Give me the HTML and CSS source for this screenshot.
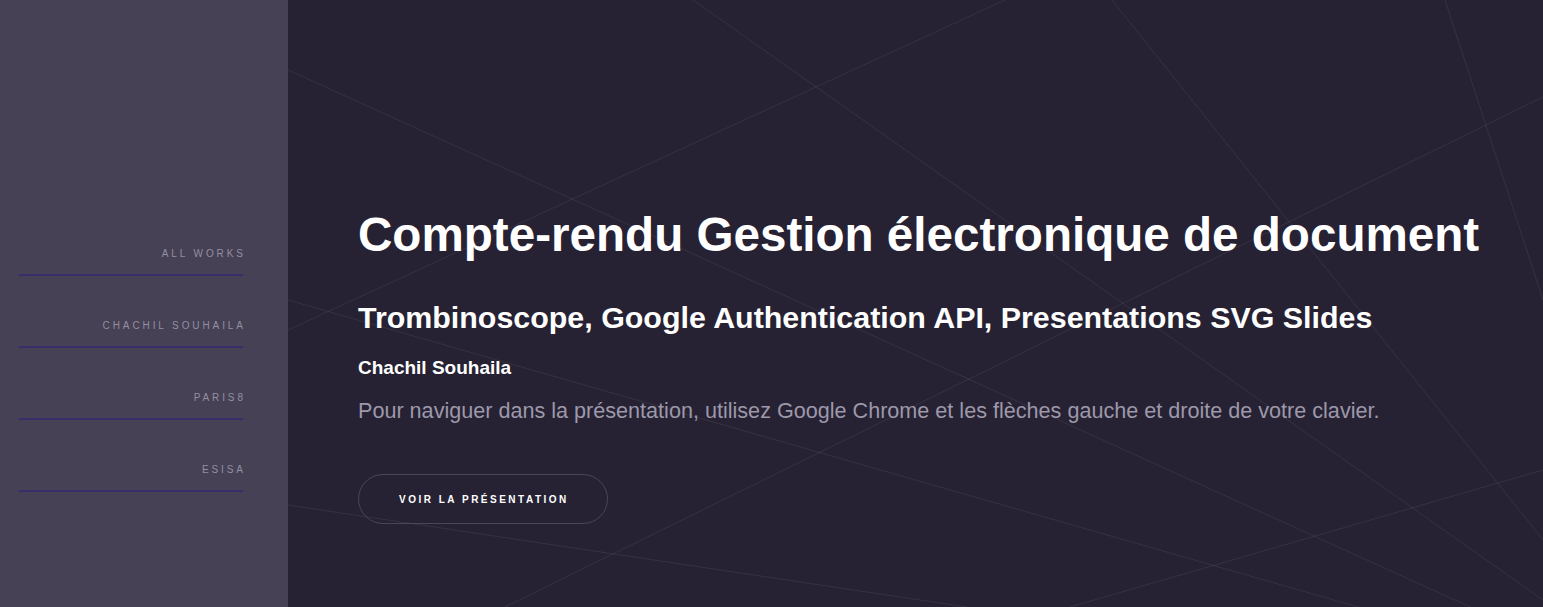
FILE: index.html
```html
<!DOCTYPE html>
<html lang="fr">
<head>
<meta charset="utf-8">
<title>Compte-rendu Gestion électronique de document</title>
<link rel="stylesheet" href="styles.css">
</head>
<body>
<div class="page">
  <aside class="sidebar">
    <nav class="nav">
      <a class="nav-item" href="#"><span>All works</span></a>
      <a class="nav-item" href="#"><span>Chachil Souhaila</span></a>
      <a class="nav-item" href="#"><span>Paris8</span></a>
      <a class="nav-item" href="#"><span>Esisa</span></a>
    </nav>
  </aside>
  <main class="main">
    <svg class="bg-lines" viewBox="288 0 1255 607" preserveAspectRatio="none" aria-hidden="true">
      <line x1="693" y1="0" x2="1543" y2="600"/>
      <line x1="288" y1="70" x2="1543" y2="640"/>
      <line x1="288" y1="330" x2="1005" y2="0"/>
      <line x1="288" y1="300" x2="1543" y2="660"/>
      <line x1="288" y1="505" x2="1000" y2="612"/>
      <line x1="1112" y1="0" x2="1543" y2="540"/>
      <line x1="1445" y1="0" x2="1543" y2="300"/>
      <line x1="1543" y1="97" x2="505" y2="607"/>
      <line x1="1543" y1="470" x2="1070" y2="607"/>
    </svg>
    <section class="content">
      <h1 class="title">Compte-rendu Gestion électronique de document</h1>
      <h2 class="subtitle">Trombinoscope, Google Authentication API, Presentations SVG Slides</h2>
      <h4 class="author">Chachil Souhaila</h4>
      <p class="desc">Pour naviguer dans la présentation, utilisez Google Chrome et les flèches gauche et droite de votre clavier.</p>
      <a class="btn" href="#">Voir la présentation</a>
    </section>
  </main>
</div>
</body>
</html>
```

FILE: styles.css
```css
html, body {
  margin: 0;
  padding: 0;
  height: 100%;
}
body {
  font-family: "Liberation Sans", Arial, sans-serif;
  background: #262233;
  overflow: hidden;
}
.page {
  display: flex;
  height: 607px;
}
.sidebar {
  width: 288px;
  flex: 0 0 288px;
  background: #464155;
}
.nav {
  display: flex;
  flex-direction: column;
  padding: 204px 45px 0 19px;
}
.nav-item {
  display: block;
  padding: 44px 0 14px;
  border-bottom: 2px solid #3a2e6a;
  text-align: right;
  text-decoration: none;
  color: #948fa2;
  font-size: 10px;
  line-height: 12px;
  letter-spacing: 2.9px;
  text-transform: uppercase;
}
.nav-item span {
  margin-right: -2.9px;
}
.main {
  position: relative;
  flex: 1;
  background: #262233;
  overflow: hidden;
}
.bg-lines {
  position: absolute;
  inset: 0;
  width: 100%;
  height: 100%;
}
.bg-lines line {
  stroke: #ffffff;
  stroke-opacity: 0.07;
  stroke-width: 1;
}
.content {
  position: relative;
  display: flex;
  flex-direction: column;
  align-items: flex-start;
  padding: 207px 0 0 70px;
}
.title {
  margin: 0;
  font-size: 47.6px;
  line-height: 56px;
  font-weight: 700;
  color: #ffffff;
}
.subtitle {
  margin: 36px 0 0;
  font-size: 30.4px;
  line-height: 36px;
  font-weight: 700;
  color: #ffffff;
}
.author {
  margin: 21px 0 0;
  font-size: 19px;
  line-height: 24px;
  font-weight: 700;
  color: #ffffff;
}
.desc {
  margin: 18px 0 0;
  font-size: 21.6px;
  line-height: 26px;
  color: #9d98aa;
}
.btn {
  margin-top: 50px;
  display: inline-flex;
  align-items: center;
  height: 48px;
  padding: 0 38px 0 40px;
  border: 1px solid #4a4659;
  border-radius: 25px;
  color: #ffffff;
  text-decoration: none;
  text-transform: uppercase;
  font-size: 10px;
  font-weight: 700;
  letter-spacing: 2.5px;
}
```
